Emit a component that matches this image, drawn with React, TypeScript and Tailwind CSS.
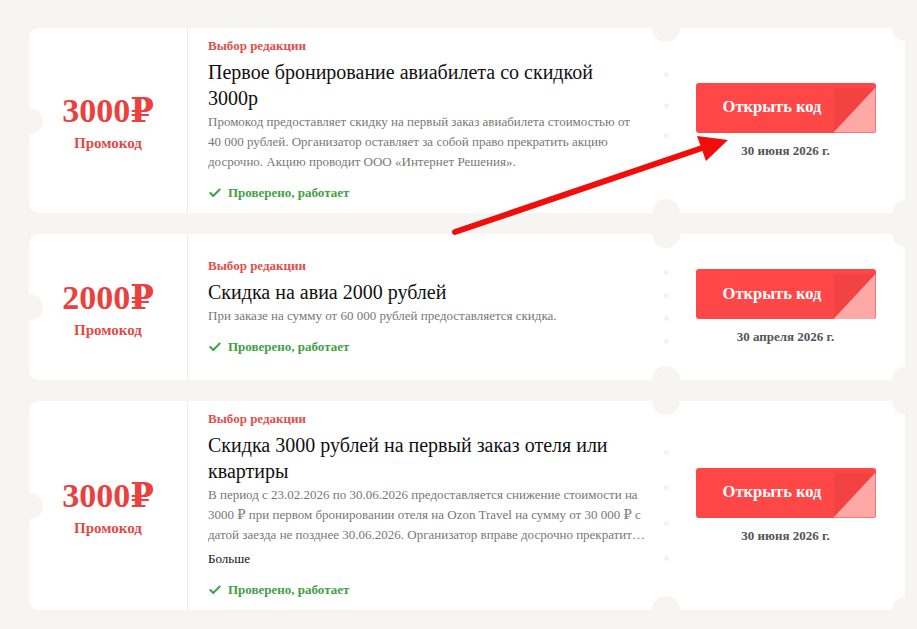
import { Check } from 'lucide-react';

type Promo = {
  amount: string;
  title: string;
  text: string;
  more?: boolean;
  date: string;
};

const promos: Promo[] = [
  {
    amount: '3000₽',
    title: 'Первое бронирование авиабилета со скидкой 3000р',
    text: 'Промокод предоставляет скидку на первый заказ авиабилета стоимостью от 40 000 рублей. Организатор оставляет за собой право прекратить акцию досрочно. Акцию проводит ООО «Интернет Решения».',
    date: '30 июня 2026 г.',
  },
  {
    amount: '2000₽',
    title: 'Скидка на авиа 2000 рублей',
    text: 'При заказе на сумму от 60 000 рублей предоставляется скидка.',
    date: '30 апреля 2026 г.',
  },
  {
    amount: '3000₽',
    title: 'Скидка 3000 рублей на первый заказ отеля или квартиры',
    text: 'В период с 23.02.2026 по 30.06.2026 предоставляется снижение стоимости на 3000 ₽ при первом бронировании отеля на Ozon Travel на сумму от 30 000 ₽ с датой заезда не позднее 30.06.2026. Организатор вправе досрочно прекратить акцию без предварительного уведомления участников.',
    more: true,
    date: '30 июня 2026 г.',
  },
];

function PromoCard({ p }: { p: Promo }) {
  return (
    <div className="relative flex min-h-[146px] overflow-hidden rounded-l-[10px] bg-white">
      {/* notch left */}
      <div className="absolute left-[-12px] top-1/2 h-[26px] w-[26px] -translate-y-1/2 rounded-full bg-[#f6f5f1]" />
      {/* right corner notches */}
      <div className="absolute right-[-13px] top-[-13px] h-[26px] w-[26px] rounded-full bg-[#f6f5f1]" />
      <div className="absolute bottom-[-13px] right-[-13px] h-[26px] w-[26px] rounded-full bg-[#f6f5f1]" />

      <div className="flex w-[159px] shrink-0 flex-col items-center justify-center border-r border-[#ececec] pt-1">
        <div className="text-[34px] font-bold leading-[36px] text-[#e8413e]">{p.amount}</div>
        <div className="mt-[5px] text-[15px] font-bold leading-[18px] text-[#e04a47]">Промокод</div>
      </div>

      <div className="flex w-[478px] shrink-0 flex-col justify-center py-2.5 pl-5 pr-5">
        <div className="text-[13px] font-bold leading-4 text-[#e0504c]">Выбор редакции</div>
        <div className="mt-[5px] text-[20px] leading-[26px] text-[#111]">{p.title}</div>
        <p className="mt-px line-clamp-3 text-[13px] leading-5 text-[#777]">{p.text}</p>
        {p.more && <div className="mt-1 text-[13px] leading-5 text-[#111]">Больше</div>}
        <div className="mt-[11px] flex items-center gap-[6px] text-[13px] font-bold leading-5 text-[#43a047]">
          <Check className="h-[14px] w-[14px]" strokeWidth={3.5} />
          <span>Проверено, работает</span>
        </div>
      </div>

      <div className="relative flex flex-1 flex-col items-center justify-center">
        <div className="absolute left-[-14px] top-[-14px] h-[28px] w-[28px] rounded-full bg-[#f6f5f1]" />
        <div className="absolute bottom-[-14px] left-[-14px] h-[28px] w-[28px] rounded-full bg-[#f6f5f1]" />
        <div className="absolute bottom-[18px] left-[-2px] top-[18px] flex flex-col justify-evenly">
          <span className="h-[5px] w-[5px] rounded-full bg-[#f4f3ef]" />
          <span className="h-[5px] w-[5px] rounded-full bg-[#f4f3ef]" />
          <span className="h-[5px] w-[5px] rounded-full bg-[#f4f3ef]" />
          <span className="h-[5px] w-[5px] rounded-full bg-[#f4f3ef]" />
        </div>
        <button className="relative h-[50px] w-[180px] overflow-hidden rounded-[3px] bg-[#ff4747] pr-[27px] text-[16.5px] font-bold text-white">
          <span className="absolute bottom-0 right-0 top-[5px] w-[42px] bg-[#f24242]" />
          <span className="absolute bottom-0 right-0 top-[5px] w-[42px] bg-[#ffa9a7] [clip-path:polygon(100%_0,100%_100%,0_100%)]" />
          <span className="relative">Открыть код</span>
        </button>
        <div className="mt-[10px] text-[13px] font-bold leading-4 text-[#555]">{p.date}</div>
      </div>
    </div>
  );
}

export default function App() {
  return (
    <main
      className="relative min-h-[629px] w-full bg-[#f6f5f1] pb-5 pl-[29px] pr-[12px] pt-[28px]"
      style={{ fontFamily: '"Liberation Serif", "DejaVu Serif", serif' }}
    >
      <div className="flex flex-col gap-[21px]">
        {promos.map((p, i) => (
          <PromoCard key={i} p={p} />
        ))}
      </div>

      {/* annotation arrow */}
      <svg
        className="pointer-events-none absolute left-0 top-0"
        width="917"
        height="629"
        viewBox="0 0 917 629"
      >
        <line x1="455" y1="232" x2="708" y2="146" stroke="#f20d0d" strokeWidth="6" strokeLinecap="round" />
        <polygon points="697,136 728,140 706,161" fill="#f20d0d" />
      </svg>
    </main>
  );
}
